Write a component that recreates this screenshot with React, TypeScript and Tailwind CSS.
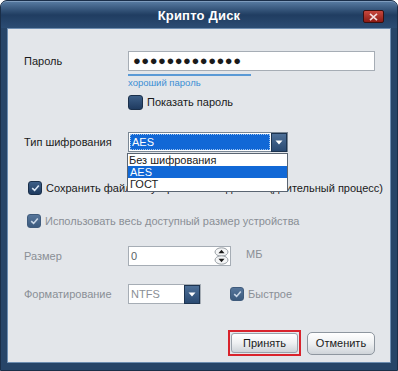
import React from "react";

function Check({ checked = true, disabled = false }: { checked?: boolean; disabled?: boolean }) {
  return (
    <div
      className={`w-[14px] h-[14px] rounded-[3px] border flex items-center justify-center shrink-0 ${
        disabled
          ? "border-[#3f5b7c] bg-gradient-to-b from-[#56759a] to-[#3b5a7e]"
          : "border-[#1a2f4a] bg-gradient-to-b from-[#3d5f88] to-[#1f3b60]"
      }`}
    >
      {checked && (
        <svg width="9" height="8" viewBox="0 0 9 8">
          <path d="M1.2 4.2 L3.6 6.4 L7.8 1.4" fill="none" stroke={disabled ? "#c9d6e6" : "#dbe7f5"} strokeWidth="1.6" />
        </svg>
      )}
    </div>
  );
}

function DropBtn() {
  return (
    <div className="w-[16px] h-[19px] bg-gradient-to-b from-[#4d6f97] to-[#2a4a72] border border-[#1d3450] flex items-center justify-center shrink-0">
      <svg width="8" height="5" viewBox="0 0 8 5">
        <path d="M0.5 0.5 L7.5 0.5 L4 4.5 Z" fill="#ffffff" />
      </svg>
    </div>
  );
}

export default function App() {
  return (
    <div className="w-[398px] h-[371px] font-['Liberation_Sans',sans-serif] text-[11px] text-[#1a1a1a] bg-white">
      <div className="w-[398px] h-[371px] rounded-t-[7px] bg-[#274568] border border-[#1a2e48] flex flex-col">
        {/* title bar */}
        <div className="h-[27px] relative flex items-center justify-center rounded-t-[6px] bg-gradient-to-b from-[#56799f] via-[#203d61] to-[#2b4c73] border-t border-[#7e9cbd]">
          <span className="text-white font-bold text-[13px] tracking-[0.2px] mt-[1px]">Крипто Диск</span>
          <div className="absolute right-[13px] top-[8px] w-[21px] h-[13px] rounded-[2px] border border-[#3a1010] bg-gradient-to-b from-[#c8483e] to-[#8c1a14] flex items-center justify-center">
            <svg width="9" height="8" viewBox="0 0 9 8">
              <path d="M1 0.8 L8 7.2 M8 0.8 L1 7.2" stroke="#f3dede" strokeWidth="1.6" />
            </svg>
          </div>
        </div>
        {/* content */}
        <div className="flex-1 mx-[6px] mb-[7px] bg-[#e3e6ea] border border-[#6d8db0] relative flex flex-col pl-[16px] pr-[15px]">
          {/* password */}
          <div className="flex items-center mt-[22px] h-[20px]">
            <div className="w-[104px]">Пароль</div>
            <div className="flex-1 h-[20px] bg-white border border-[#a6adb5] flex items-center px-[4px]">
              <span className="text-[13px] tracking-[0.5px] leading-none mt-[-2px]">●●●●●●●●●●●●●</span>
            </div>
          </div>
          <div className="ml-[104px] mt-[3px] w-[123px] h-[2px] bg-[#5a9ad6]" />
          <div className="ml-[104px] mt-[1px] text-[9.5px] text-[#3b8ed4] leading-[12px]">хороший пароль</div>
          <div className="ml-[104px] mt-[6px] flex items-center gap-[4px] h-[15px]">
            <div className="w-[15px] h-[15px] rounded-[3px] border border-[#1a2f4a] bg-gradient-to-b from-[#3d5f88] to-[#1f3b60]" />
            <span>Показать пароль</span>
          </div>
          {/* encryption type */}
          <div className="flex items-center mt-[22px] h-[20px] relative">
            <div className="w-[104px]">Тип шифрования</div>
            <div className="w-[160px] h-[20px] flex border border-[#7a8794]">
              <div className="flex-1 bg-white p-[1px]">
                <div className="h-full bg-[#1168d6] text-white flex items-center px-[1px] border border-dotted border-[#9cc3f0]">AES</div>
              </div>
              <DropBtn />
            </div>
            {/* open list */}
            <div className="absolute left-[103px] top-[21px] w-[161px] bg-white border border-[#5a6572] z-10 flex flex-col">
              <div className="h-[12px] leading-[12px] px-[1px]">Без шифрования</div>
              <div className="h-[12px] leading-[12px] px-[2px] bg-[#1168d6] text-white">AES</div>
              <div className="h-[12px] leading-[12px] px-[2px] mb-[1px]">ГОСТ</div>
            </div>
          </div>
          <div className="flex items-center gap-[4px] mt-[29px] ml-[4px] h-[14px]">
            <Check />
            <span className="whitespace-nowrap">Сохранить файлы с устройства на диск ПК (длительный процесс)</span>
          </div>
          <div className="flex items-center gap-[4px] mt-[19px] ml-[3px] h-[14px] text-[#8a8f96]">
            <Check disabled />
            <span className="whitespace-nowrap">Использовать весь доступный размер устройства</span>
          </div>
          {/* size */}
          <div className="flex items-center mt-[18px] h-[20px] text-[#8a8f96]">
            <div className="w-[104px]">Размер</div>
            <div className="w-[103px] h-[20px] bg-white border border-[#a6adb5] flex items-center pl-[2px] pr-[1px]">
              <span className="flex-1 text-[#5a5f66]">0</span>
              <svg width="15" height="18" viewBox="0 0 15 18">
                <ellipse cx="7.5" cy="5" rx="6.5" ry="4.2" fill="#f4f5f6" stroke="#9aa0a6" />
                <ellipse cx="7.5" cy="13" rx="6.5" ry="4.2" fill="#f4f5f6" stroke="#9aa0a6" />
                <path d="M4.5 6.3 L10.5 6.3 L7.5 2.8 Z" fill="#1a1a1a" />
                <path d="M4.5 11.7 L10.5 11.7 L7.5 15.2 Z" fill="#1a1a1a" />
              </svg>
            </div>
            <span className="ml-[15px] mt-[-4px]">МБ</span>
          </div>
          {/* format */}
          <div className="flex items-center mt-[18px] h-[20px] text-[#8a8f96]">
            <div className="w-[104px]">Форматирование</div>
            <div className="w-[73px] h-[20px] flex border border-[#a6adb5]">
              <div className="flex-1 bg-white flex items-center px-[2px]">NTFS</div>
              <DropBtn />
            </div>
            <div className="ml-[29px] flex items-center gap-[4px]">
              <Check disabled />
              <span>Быстрое</span>
            </div>
          </div>
          {/* buttons */}
          <div className="mt-auto mb-[6px] flex justify-end items-center gap-[6px]">
            <div className="border-2 border-[#d9232c] p-[1px]">
              <div className="w-[67px] h-[20px] rounded-[3px] border border-[#9aa2ab] bg-gradient-to-b from-[#ffffff] via-[#eef0f2] to-[#cfd4d9] flex items-center justify-center text-[#1a1a1a]">
                Принять
              </div>
            </div>
            <div className="w-[68px] h-[23px] rounded-[5px] border border-[#8e969f] bg-gradient-to-b from-[#ffffff] via-[#eef0f2] to-[#cfd4d9] flex items-center justify-center">
              Отменить
            </div>
          </div>
        </div>
      </div>
    </div>
  );
}
